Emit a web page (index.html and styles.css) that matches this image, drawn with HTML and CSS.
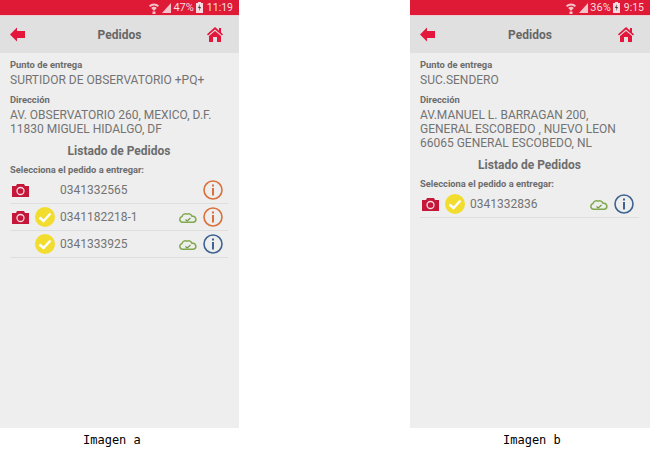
FILE: index.html
```html
<!DOCTYPE html>
<html lang="es">
<head>
<meta charset="utf-8">
<title>Pedidos</title>
<link rel="stylesheet" href="styles.css">
</head>
<body>
<svg class="defs" width="0" height="0" aria-hidden="true">
  <defs>
    <symbol id="i-wifi" viewBox="0 0 10 12"><path d="M0 3.500a7 7 0 0 1 10 0L8.800 5a5.300 5.300 0 0 0-7.600 0z" fill="#f4c3ca"/><path d="M2.200 6a3.900 3.900 0 0 1 5.600 0L5 9z" fill="#f4c3ca"/><rect x="3.500" y="9.500" width="3" height="2.500" fill="#f4c3ca"/></symbol>
    <symbol id="i-signal" viewBox="0 0 9 10"><path d="M0 10 L9 0 V10z" fill="#f4c3ca"/></symbol>
    <symbol id="i-batt" viewBox="0 0 7 11"><path d="M2 0h3v1h2v10H0V1h2z" fill="#f7dbe0"/><path d="M4 2 2 6h1.500L3 9l2-4H3.500z" fill="#333"/></symbol>
    <symbol id="i-back" viewBox="0 0 15 15"><path d="M0 7.500 7 .5V4h8v7H7v3.500z" fill="#e4163c"/></symbol>
    <symbol id="i-home" viewBox="0 0 16 15"><path d="M8 0 12 3.600V1h2v4.400L16 7.300 15 8.600 8 2.500 1 8.600 0 7.300z" fill="#e4163c"/><path d="M8 4 14 9v6H10V10H6v5H2V9z" fill="#e4163c"/></symbol>
    <symbol id="i-cam" viewBox="0 0 17 13"><path d="M0 2h4l1-2h7l1 2h4v11H0z" fill="#c5173a"/><circle cx="8.500" cy="7" r="3.500" fill="none" stroke="#f3dde2" stroke-width="1.300"/></symbol>
    <symbol id="i-check" viewBox="0 0 20 20"><circle cx="10" cy="10" r="10" fill="#f2dc2e"/><path d="M4.500 10.500 8.500 14 15.500 6.500" fill="none" stroke="#fff" stroke-width="2.400"/></symbol>
    <symbol id="i-cloud" viewBox="0 0 18 11"><path d="M4 10.200H3.500A2.900 2.900 0 0 1 3 4.500 3.500 3.500 0 0 1 8 2.200 3.600 3.600 0 0 1 13 4.300 3 3 0 0 1 14.500 10.200z" fill="none" stroke="#80a94c" stroke-width="1.500"/><path d="M6.500 7.500 8.200 9 11.500 6" fill="none" stroke="#6f9a45" stroke-width="1.200"/></symbol>
    <symbol id="i-info" viewBox="0 0 20 20"><circle cx="10" cy="10" r="9" fill="none" stroke="currentColor" stroke-width="1.600"/><rect x="9" y="8" width="2" height="7.500" fill="currentColor"/><rect x="9" y="4.500" width="2" height="2" fill="currentColor"/></symbol>
  </defs>
</svg>
<main class="page">
  <figure class="shot">
    <div class="phone phone-a">
      <div class="status">
        <svg class="st-wifi"><use href="#i-wifi"/></svg>
        <svg class="st-signal"><use href="#i-signal"/></svg>
        <span>47%</span>
        <svg class="st-batt"><use href="#i-batt"/></svg>
        <span class="st-time">11:19</span>
      </div>
      <header class="bar">
        <svg class="back"><use href="#i-back"/></svg>
        <h1>Pedidos</h1>
        <svg class="home"><use href="#i-home"/></svg>
      </header>
      <section class="body">
        <h2>Punto de entrega</h2>
        <p>SURTIDOR DE OBSERVATORIO +PQ+</p>
        <h2 class="second">Dirección</h2>
        <p>AV. OBSERVATORIO 260, MEXICO, D.F.<br>11830 MIGUEL HIDALGO, DF</p>
        <h3>Listado de Pedidos</h3>
        <h2 class="pick">Selecciona el pedido a entregar:</h2>
        <ul class="rows">
          <li class="row">
            <svg class="cam"><use href="#i-cam"/></svg>
            <span class="slot"></span>
            <span class="num">0341332565</span>
            <svg class="info orange"><use href="#i-info"/></svg>
          </li>
          <li class="row">
            <svg class="cam"><use href="#i-cam"/></svg>
            <svg class="slot"><use href="#i-check"/></svg>
            <span class="num">0341182218-1</span>
            <svg class="cloud"><use href="#i-cloud"/></svg>
            <svg class="info orange"><use href="#i-info"/></svg>
          </li>
          <li class="row">
            <span class="cam"></span>
            <svg class="slot"><use href="#i-check"/></svg>
            <span class="num">0341333925</span>
            <svg class="cloud"><use href="#i-cloud"/></svg>
            <svg class="info blue"><use href="#i-info"/></svg>
          </li>
        </ul>
      </section>
    </div>
    <figcaption class="cap-a">Imagen a</figcaption>
  </figure>
  <figure class="shot">
    <div class="phone">
      <div class="status">
        <svg class="st-wifi"><use href="#i-wifi"/></svg>
        <svg class="st-signal"><use href="#i-signal"/></svg>
        <span>36%</span>
        <svg class="st-batt"><use href="#i-batt"/></svg>
        <span class="st-time">9:15</span>
      </div>
      <header class="bar">
        <svg class="back"><use href="#i-back"/></svg>
        <h1>Pedidos</h1>
        <svg class="home"><use href="#i-home"/></svg>
      </header>
      <section class="body">
        <h2>Punto de entrega</h2>
        <p>SUC.SENDERO</p>
        <h2 class="second">Dirección</h2>
        <p>AV.MANUEL L. BARRAGAN 200,<br>GENERAL ESCOBEDO , NUEVO LEON<br>66065 GENERAL ESCOBEDO, NL</p>
        <h3>Listado de Pedidos</h3>
        <h2 class="pick">Selecciona el pedido a entregar:</h2>
        <ul class="rows">
          <li class="row">
            <svg class="cam"><use href="#i-cam"/></svg>
            <svg class="slot"><use href="#i-check"/></svg>
            <span class="num">0341332836</span>
            <svg class="cloud"><use href="#i-cloud"/></svg>
            <svg class="info blue"><use href="#i-info"/></svg>
          </li>
        </ul>
      </section>
    </div>
    <figcaption class="cap-b">Imagen b</figcaption>
  </figure>
</main>
</body>
</html>
```

FILE: styles.css
```css
* { box-sizing: border-box; }
html, body { margin: 0; padding: 0; background: #fff; }
body { width: 650px; height: 450px; overflow: hidden; font-family: Roboto, sans-serif; }
.defs { display: block; height: 0; }
.page { display: flex; justify-content: space-between; width: 650px; }
.shot { margin: 0; width: 240px; }
.phone { height: 428px; background: #eeeeee; }
.phone-a { width: 239px; }
.status { display: flex; align-items: center; justify-content: flex-end; height: 15px; padding-right: 6px; background: #de1a36; color: #f7dbe0; font-size: 11px; }
.st-wifi { width: 10px; height: 12px; margin-right: 3px; }
.st-signal { width: 9px; height: 10px; margin-right: 2px; }
.st-batt { width: 7px; height: 11px; margin: 0 3px 0 2px; }
.st-time { margin-left: 1px; font-size: 10.500px; }
.bar { display: grid; grid-template-columns: 1fr auto 1fr; align-items: center; height: 38px; background: #e0e0e0; border-top: 1px solid #eccdd2; }
.bar h1 { margin: 0; font-size: 12px; font-weight: 700; color: #666; }
.back { width: 15px; height: 15px; margin-left: 10px; }
.home { justify-self: end; width: 16px; height: 15px; margin-right: 16px; }
.body { padding: 6px 11px 0 10px; color: #666; }
.body h2 { margin: 0; font-size: 9.400px; line-height: 12px; font-weight: 700; color: #6c6c6c; }
.body p { margin: 2px 0 0; font-size: 12px; line-height: 14px; color: #737373; }
.body h2.second { margin-top: 7px; }
.body h3 { margin: 7px 0 0; font-size: 12px; line-height: 16px; font-weight: 700; text-align: center; color: #6c6c6c; }
.body h2.pick { margin-top: 5px; font-size: 9.300px; }
.rows { list-style: none; margin: 1px 0 0; padding: 0; }
.row { display: flex; align-items: center; height: 27px; border-bottom: 1px solid #dedede; }
.cam { flex: none; width: 17px; height: 13px; margin: 0 6px 0 2px; }
.slot { flex: none; width: 20px; height: 20px; margin-right: 5px; }
.num { flex: 1; font-size: 12px; color: #737373; }
.cloud { flex: none; width: 18px; height: 11px; margin-right: 6px; }
.info { flex: none; width: 20px; height: 20px; margin-right: 5px; }
.orange { color: #d9703a; }
.blue { color: #3d6390; }
figcaption { height: 22px; font-family: "DejaVu Sans Mono", monospace; font-size: 12px; line-height: 24px; color: #000; }
.cap-a { padding-left: 83px; }
.cap-b { padding-left: 93px; }
```
